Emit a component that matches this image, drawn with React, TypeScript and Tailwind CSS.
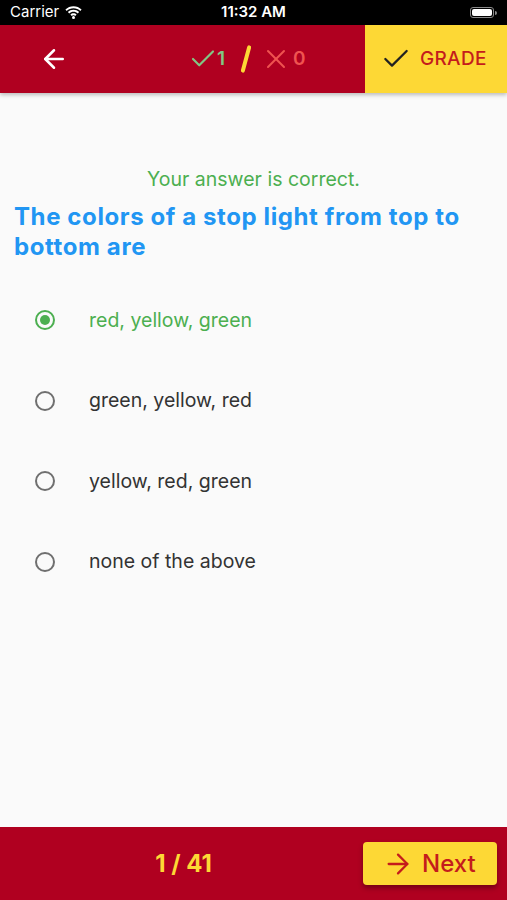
import React from "react";
import { ArrowLeft, ArrowRight, Check, X } from "lucide-react";

const options = [
    { label: "red, yellow, green", selected: true },
    { label: "green, yellow, red", selected: false },
    { label: "yellow, red, green", selected: false },
    { label: "none of the above", selected: false },
];

const StatusBar = () => (
    <div className="flex h-[25px] items-center justify-between bg-black px-[10px] text-[15px] text-white">
        <div className="flex w-[120px] items-center gap-[6px]">
            <span>Carrier</span>
            <svg width="17" height="13" viewBox="0 0 17 13" fill="white">
                <path d="M8.5 2.2c2.6 0 5 1 6.8 2.7l1.3-1.4C14.4 1.4 11.6.2 8.5.2S2.6 1.4.4 3.5l1.3 1.4C3.5 3.2 5.9 2.2 8.5 2.2z" />
                <path d="M8.5 5.7c1.6 0 3.1.6 4.3 1.7l1.3-1.4C12.6 4.6 10.6 3.7 8.5 3.7S4.4 4.6 2.9 6l1.3 1.4c1.2-1.1 2.7-1.7 4.3-1.7z" />
                <path d="M8.5 9.2c.7 0 1.3.3 1.8.7l1.3-1.4C10.8 7.7 9.7 7.2 8.5 7.2S6.2 7.7 5.4 8.5l1.3 1.4c.5-.4 1.1-.7 1.8-.7z" />
                <circle cx="8.5" cy="11.5" r="1.5" />
            </svg>
        </div>
        <span className="font-semibold">11:32 AM</span>
        <div className="flex w-[120px] justify-end">
            <div className="flex items-center">
                <div className="flex h-[11px] w-[24px] items-center rounded-[3px] border border-[#8a8a8a] p-[1px]">
                    <div className="h-full w-full rounded-[2px] bg-white" />
                </div>
                <div className="ml-[1px] h-[4px] w-[2px] rounded-r-sm bg-[#8a8a8a]" />
            </div>
        </div>
    </div>
);

const Radio = ({ selected }: { selected: boolean }) =>
    selected ? (
        <span className="flex h-[20px] w-[20px] items-center justify-center rounded-full border-2 border-[#4caf50]">
            <span className="h-[10px] w-[10px] rounded-full bg-[#4caf50]" />
        </span>
    ) : (
        <span className="h-[20px] w-[20px] rounded-full border-2 border-[#6f6f6f]" />
    );

export default function App() {
    return (
        <div className="flex h-[900px] w-[507px] flex-col overflow-hidden bg-[#fafafa] font-['Inter',sans-serif]">
            <StatusBar />

            {/* app bar */}
            <div className="relative z-10 flex h-[68px] items-stretch bg-[#b00020] shadow-[0_2px_4px_rgba(0,0,0,0.25)]">
                <div className="flex w-[108px] items-center justify-center">
                    <ArrowLeft size={30} strokeWidth={2} className="text-white" />
                </div>
                <div className="flex flex-1 items-center pl-[80px]">
                    <Check size={30} strokeWidth={1.7} className="text-[#81c784]" />
                    <span className="ml-[-1px] text-[19px] font-semibold text-[#81c784]">1</span>
                    <span className="ml-[19px] h-[28px] w-[4px] rotate-[15deg] rounded-full bg-[#fdd835]" />
                    <X size={32} strokeWidth={1.5} className="ml-[12px] text-[#ef5350]" />
                    <span className="ml-[1px] text-[19px] font-semibold text-[#ef5350]">0</span>
                </div>
                <div className="flex w-[142px] items-center gap-[8px] bg-[#fdd835] pl-[15px]">
                    <Check size={32} strokeWidth={1.7} className="text-[#212121]" />
                    <span className="text-[19px] font-medium tracking-[0.3px] text-[#c41c1c]">GRADE</span>
                </div>
            </div>

            {/* body */}
            <div className="flex flex-1 flex-col">
                <p className="mt-[73px] text-center text-[19.5px] leading-[26px] text-[#4caf50]">Your answer is correct.</p>
                <h1 className="mt-[10px] px-[14px] text-[24px] font-bold leading-[30px] tracking-[0.6px] text-[#2196f3]">
                    The colors of a stop light from top to bottom are
                </h1>
                <div className="mt-[18px] flex flex-col">
                    {options.map((o) => (
                        <div key={o.label} className="flex h-[80.5px] items-center">
                            <div className="flex w-[89px] justify-center">
                                <Radio selected={o.selected} />
                            </div>
                            <span
                                className={
                                    o.selected
                                        ? "text-[19.5px] text-[#4caf50]"
                                        : "text-[19.5px] text-[#333333]"
                                }
                            >
                                {o.label}
                            </span>
                        </div>
                    ))}
                </div>
            </div>

            {/* bottom bar */}
            <div className="flex h-[73px] items-center bg-[#b00020]">
                <div className="flex flex-1 justify-center pl-[4px]">
                    <span className="text-[24px] font-bold text-[#fdd835]">1 / 41</span>
                </div>
                <button
                    type="button"
                    className="mr-[10px] flex h-[43px] w-[134px] items-center gap-[8px] rounded-[4px] bg-[#fdd835] pl-[19px] shadow-[0_3px_5px_rgba(0,0,0,0.35)]"
                >
                    <ArrowRight size={32} strokeWidth={1.7} className="text-[#c41c1c]" />
                    <span className="text-[24px] font-medium text-[#c41c1c]">Next</span>
                </button>
            </div>
        </div>
    );
}
